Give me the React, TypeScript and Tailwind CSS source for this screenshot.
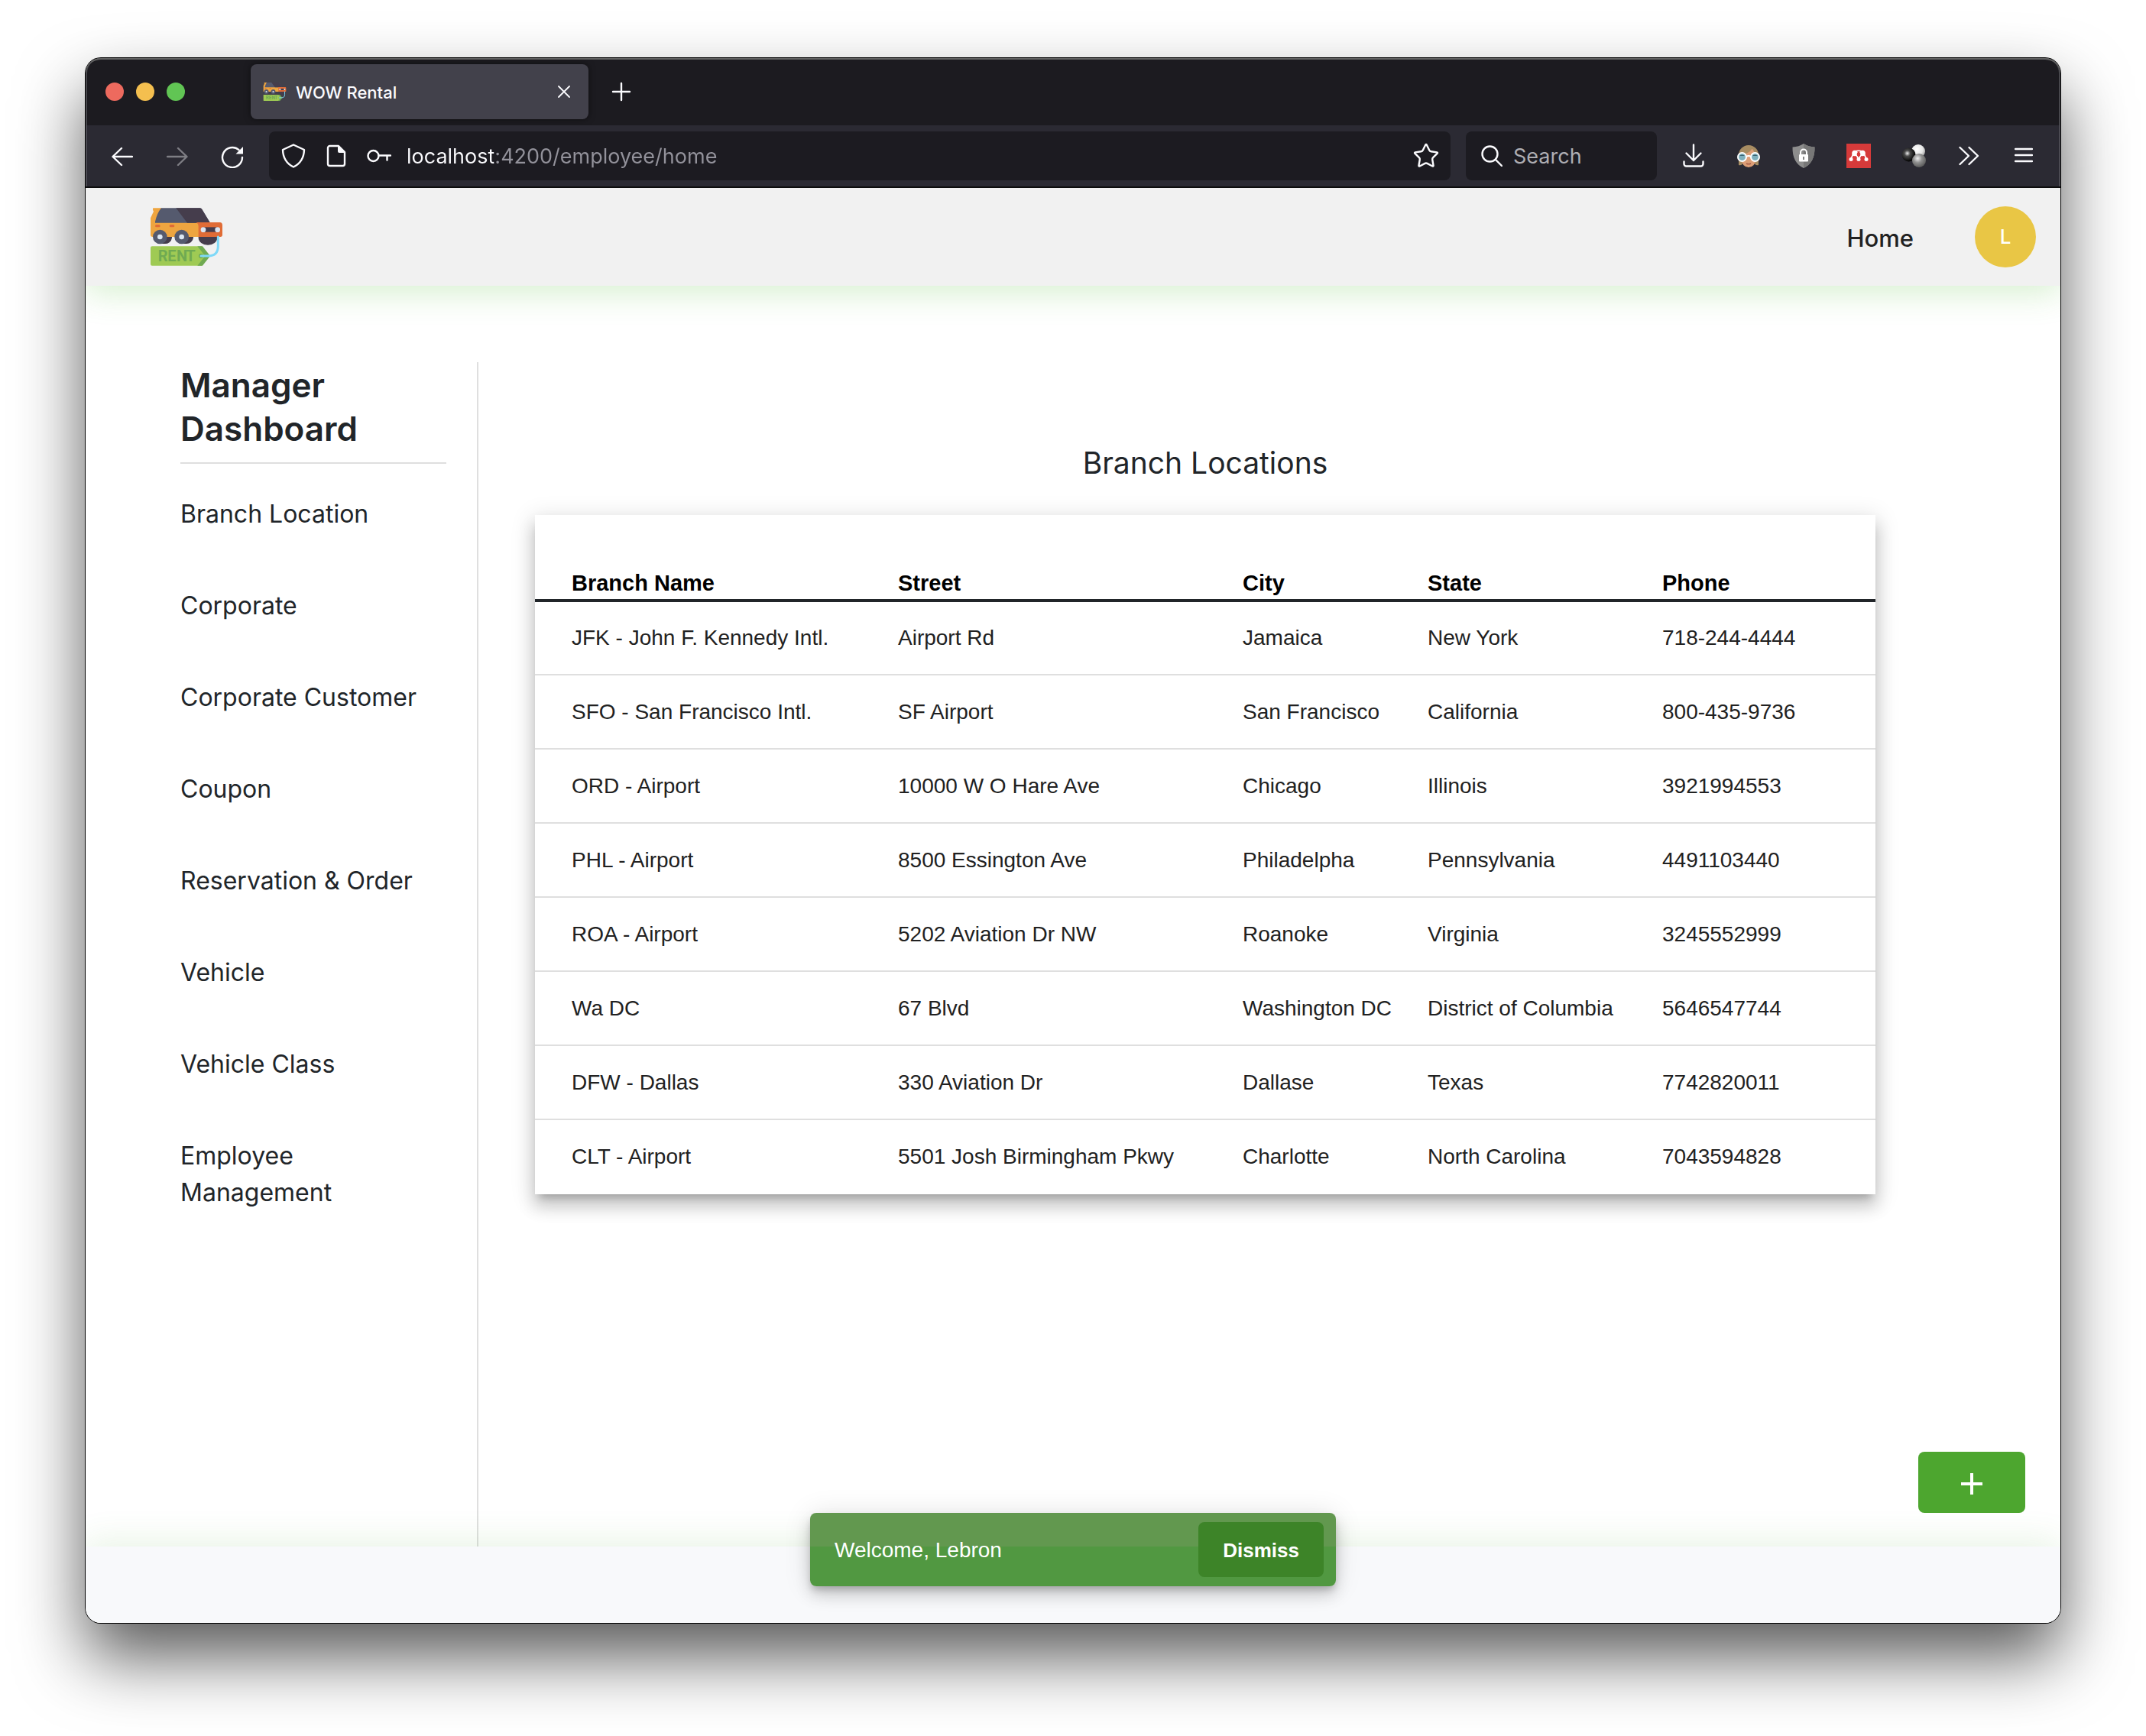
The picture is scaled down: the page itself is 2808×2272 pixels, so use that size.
import React from "react";
import { Star } from "lucide-react";

const navItems = [
  "Branch Location",
  "Corporate",
  "Corporate Customer",
  "Coupon",
  "Reservation & Order",
  "Vehicle",
  "Vehicle Class",
  "Employee Management",
];

const columns = ["Branch Name", "Street", "City", "State", "Phone"];

const branches = [
  ["JFK - John F. Kennedy Intl.", "Airport Rd", "Jamaica", "New York", "718-244-4444"],
  ["SFO - San Francisco Intl.", "SF Airport", "San Francisco", "California", "800-435-9736"],
  ["ORD - Airport", "10000 W O Hare Ave", "Chicago", "Illinois", "3921994553"],
  ["PHL - Airport", "8500 Essington Ave", "Philadelpha", "Pennsylvania", "4491103440"],
  ["ROA - Airport", "5202 Aviation Dr NW", "Roanoke", "Virginia", "3245552999"],
  ["Wa DC", "67 Blvd", "Washington DC", "District of Columbia", "5646547744"],
  ["DFW - Dallas", "330 Aviation Dr", "Dallase", "Texas", "7742820011"],
  ["CLT - Airport", "5501 Josh Birmingham Pkwy", "Charlotte", "North Carolina", "7043594828"],
];

function RentLogo({ className }: { className: string }) {
  return (
    <svg viewBox="0 0 282 228" className={className} aria-hidden="true">
      <path d="M188 114H262V118A34 26 0 0 1 188 118Z" fill="#453d4c" />
      <path d="M30 114H84V118A27 26 0 0 1 54 141H38Z" fill="#453d4c" />
      <path d="M116 114H168V118A27 26 0 0 1 140 141H122Z" fill="#453d4c" />
      <path d="M10 1H44L30 57 192 57V114H8Q0 114 0 106V40L12 14Q7 8 10 1Z" fill="#eea540" />
      <path d="M42 1H194Q199 1 202 6L234 59H18V54Q26 20 42 1Z" fill="#555a6e" />
      <path d="M100 1H194Q199 1 202 6L234 59H144Z" fill="#453d4c" />
      <path d="M178 57H272Q282 58 282 68V106Q282 114 274 114H188V74Q188 60 178 57Z" fill="#e06c36" />
      <rect x="18" y="66" width="20" height="10" rx="5" fill="#e06c36" />
      <rect x="74" y="66" width="20" height="10" rx="5" fill="#e06c36" />
      <rect x="206" y="76" width="58" height="19" fill="#453d4c" />
      <circle cx="207" cy="86" r="10" fill="#dce7f3" />
      <circle cx="263" cy="86" r="10" fill="#dce7f3" />
      <circle cx="37" cy="114" r="28" fill="#555a6e" />
      <circle cx="37" cy="114" r="10" fill="#dce7f3" />
      <circle cx="122" cy="114" r="28" fill="#555a6e" />
      <circle cx="122" cy="114" r="10" fill="#dce7f3" />
      <path d="M6 151H200L234 189 200 227H6Q0 227 0 221V157Q0 151 6 151Z" fill="#9fca54" />
      <path d="M184 151H204L234 189 204 227H184L214 189Z" fill="#70aa52" />
      <circle cx="198" cy="189" r="9" fill="#70aa52" />
      <path d="M198 189H226Q265 189 265 150V114" fill="none" stroke="#7fd9f8" strokeWidth="9" strokeLinecap="round" />
      <text x="29 67 102 139" y="210" fontFamily="Roboto, sans-serif" fontWeight="700" fontSize="60" fill="#70aa52">
        RENT
      </text>
    </svg>
  );
}

const line = {
  fill: "none",
  stroke: "#fbfbfe",
  strokeWidth: 2.4,
  strokeLinecap: "round" as const,
  strokeLinejoin: "round" as const,
};

function ToolButton({ label, children }: { label: string; children: React.ReactNode }) {
  return (
    <button type="button" aria-label={label} className="flex h-16 w-[72px] shrink-0 items-center justify-center">
      {children}
    </button>
  );
}

function FieldButton({ label, children }: { label: string; children: React.ReactNode }) {
  return (
    <button type="button" aria-label={label} className="flex h-16 w-14 shrink-0 items-center justify-center">
      {children}
    </button>
  );
}

function TabStrip() {
  return (
    <div className="flex h-[88px] shrink-0 items-center rounded-t-[20px] bg-[#1c1b20] pl-[26px] shadow-[inset_0_2px_0_#626262,inset_2px_0_0_#47474c,inset_-2px_0_0_#47474c]">
      <div className="flex gap-4">
        <button type="button" aria-label="Close window" className="size-6 rounded-full bg-[#ed6a5e]" />
        <button type="button" aria-label="Minimize window" className="size-6 rounded-full bg-[#f4bf4f]" />
        <button type="button" aria-label="Zoom window" className="size-6 rounded-full bg-[#61c554]" />
      </div>
      <div className="ml-[86px] flex h-[72px] w-[442px] items-center rounded-lg bg-[#42414b] pl-4 pr-5 shadow-[0_0_8px_rgba(0,0,0,0.5)]">
        <RentLogo className="h-6 w-[31px]" />
        <span className="ml-3 flex-1 pt-0.5 text-[22px] leading-8 font-medium text-[#fbfbfe]">WOW Rental</span>
        <button type="button" aria-label="Close tab" className="flex size-6 items-center justify-center">
          <svg viewBox="0 0 16 16" className="size-4">
            <path d="M1 1 15 15M15 1 1 15" {...line} strokeWidth={1.8} />
          </svg>
        </button>
      </div>
      <button type="button" aria-label="New tab" className="ml-[30px] flex size-[26px] items-center justify-center">
        <svg viewBox="0 0 26 26" className="size-[26px]">
          <path d="M13 2V24M2 13H24" {...line} />
        </svg>
      </button>
    </div>
  );
}

function Toolbar() {
  return (
    <div className="flex h-[82px] shrink-0 items-center border-b-2 border-[#0c0c0d] bg-[#2b2a33] px-3 shadow-[inset_2px_0_0_#4b4a52,inset_-2px_0_0_#4b4a52]">
      <ToolButton label="Back">
        <svg viewBox="0 0 28 28" className="size-7">
          <path d="M27 15H2M13 4 1.5 15 13 26" {...line} />
        </svg>
      </ToolButton>
      <ToolButton label="Forward">
        <svg viewBox="0 0 28 28" className="size-7 opacity-40">
          <path d="M1 15H26M15 4 26.5 15 15 26" {...line} />
        </svg>
      </ToolButton>
      <ToolButton label="Reload">
        <svg viewBox="0 0 32 32" className="size-8">
          <path d="M29 18A13 13 0 1 1 24.5 8.2" {...line} />
          <path d="M30 4V13.5H20.5Z" fill="#fbfbfe" />
        </svg>
      </ToolButton>

      <div className="ml-3 flex h-16 min-w-0 flex-1 items-center rounded-lg bg-[#1c1b21] px-1">
        <FieldButton label="Tracking protection">
          <svg viewBox="0 0 32 32" className="size-8">
            <path d="M16 1.5 30 8Q29.500 24 16 30.500 2.500 24 2 8Z" {...line} />
          </svg>
        </FieldButton>
        <FieldButton label="Site information">
          <svg viewBox="0 0 28 32" className="h-8 w-7">
            <path d="M5.500 3H17L25 11V26.500A2.500 2.500 0 0 1 22.500 29H5.500A2.500 2.500 0 0 1 3 26.500V5.500A2.500 2.500 0 0 1 5.500 3Z" {...line} />
            <path d="M16 2 26 12H18A2 2 0 0 1 16 10Z" fill="#fbfbfe" />
          </svg>
        </FieldButton>
        <FieldButton label="Saved password">
          <svg viewBox="0 0 32 20" className="h-5 w-8">
            <circle cx="8.500" cy="10" r="7" {...line} />
            <path d="M15.500 9.500H31M26.500 9.500V15.500" {...line} />
          </svg>
        </FieldButton>
        <input
          type="text"
          aria-label="Address"
          defaultValue="localhost:4200/employee/home"
          className="ml-2 h-10 min-w-0 flex-1 bg-[linear-gradient(90deg,#fbfbfe_114px,#93929b_114px)] bg-clip-text pt-0.5 text-[27px] text-transparent outline-none"
        />
        <FieldButton label="Bookmark this page">
          <Star className="size-9 text-[#fbfbfe]" strokeWidth={1.6} />
        </FieldButton>
      </div>

      <label className="ml-5 flex h-16 w-[250px] items-center rounded-lg bg-[#1c1b21] pl-5">
        <svg viewBox="0 0 28 28" className="size-7 shrink-0">
          <circle cx="11.500" cy="11.500" r="10" {...line} />
          <path d="M19 19 27 27" {...line} />
        </svg>
        <input
          type="text"
          aria-label="Search"
          placeholder="Search"
          className="ml-3.5 h-10 w-full min-w-0 bg-transparent pt-0.5 text-[27px] outline-none placeholder:text-[#aeaeb3]"
        />
      </label>

      <div className="ml-3 flex">
        <ToolButton label="Downloads">
          <svg viewBox="0 0 28 32" className="h-8 w-7">
            <path d="M14 1.500V22M4.500 12.500 14 22 23.500 12.500M1.500 23.500V26.500A3 3 0 0 0 4.500 29.500H23.500A3 3 0 0 0 26.500 26.500V23.500" {...line} />
          </svg>
        </ToolButton>
        <ToolButton label="Profile extension">
          <svg viewBox="0 0 32 32" className="size-8">
            <path d="M3 28V15A13 13 0 0 1 29 15V28Q25 29 24 26H8Q7 29 3 28Z" fill="#a78c62" />
            <path d="M6 17Q10 9 21 7L26 15V20Q24 31 16 31 8 31 6 20Z" fill="#dc9e77" />
            <path d="M5 16Q7 8 21 6 17 13 5 16Z" fill="#a78c62" />
            <circle cx="7.500" cy="17.500" r="5.500" fill="#7fb0bd" stroke="#fff" strokeWidth="2" />
            <circle cx="24.500" cy="17.500" r="5.500" fill="#7fb0bd" stroke="#fff" strokeWidth="2" />
            <path d="M4 16A4 3 0 0 1 11 16ZM21 16A4 3 0 0 1 28 16Z" fill="#3d6472" />
            <path d="M13 17Q16 15 19 17" fill="none" stroke="#fff" strokeWidth="2" />
            <path d="M13 26Q16 27.500 19 26" fill="none" stroke="#a85e48" strokeWidth="1.500" />
          </svg>
        </ToolButton>
        <ToolButton label="Privacy extension">
          <svg viewBox="0 0 32 32" className="size-8">
            <path d="M16 0Q22 4 30.500 4.500 31 25 16 32 1 25 1.500 4.500 10 4 16 0Z" fill="#8d8d8d" />
            <path d="M16 0Q22 4 30.500 4.500 31 25 16 32Z" fill="#777" />
            <rect x="10" y="14" width="12" height="9.500" rx="1" fill="#fff" />
            <path d="M12 14V11.500A4 4 0 0 1 20 11.500V14" fill="none" stroke="#fff" strokeWidth="2" />
            <path d="M16 17V21" stroke="#777" strokeWidth="1.800" />
          </svg>
        </ToolButton>
        <ToolButton label="Reference manager extension">
          <svg viewBox="0 0 32 32" className="size-8">
            <rect width="32" height="32" fill="#d63a3a" />
            <path d="M6 20 9 13M26 20 23 13M11 12 16 20 21 12" fill="none" stroke="#fff" strokeWidth="1.800" />
            <path d="M11 10.500Q16 8 21 10.500" fill="none" stroke="#fff" strokeWidth="1.500" />
            <circle cx="11" cy="12.500" r="3.800" fill="#fff" />
            <circle cx="21" cy="12.500" r="3.800" fill="#fff" />
            <circle cx="16" cy="14" r="2.400" fill="#d63a3a" />
            <circle cx="6" cy="20.500" r="2.500" fill="#fff" />
            <circle cx="16" cy="20.500" r="2.500" fill="#fff" />
            <circle cx="26" cy="20.500" r="2.500" fill="#fff" />
          </svg>
        </ToolButton>
        <ToolButton label="Spheres extension">
          <svg viewBox="0 0 32 32" className="size-8">
            <defs>
              <radialGradient id="ball-white" cx="0.4" cy="0.35" r="0.700">
                <stop offset="0" stopColor="#fff" />
                <stop offset="0.600" stopColor="#e6e6e6" />
                <stop offset="1" stopColor="#9a9a9a" />
              </radialGradient>
              <radialGradient id="ball-black" cx="0.4" cy="0.4" r="0.600">
                <stop offset="0" stopColor="#f0f0f0" />
                <stop offset="0.350" stopColor="#4a4a4a" />
                <stop offset="1" stopColor="#000" />
              </radialGradient>
              <radialGradient id="ball-gray" cx="0.4" cy="0.35" r="0.700">
                <stop offset="0" stopColor="#efefef" />
                <stop offset="0.450" stopColor="#8e8e8e" />
                <stop offset="1" stopColor="#555" />
              </radialGradient>
            </defs>
            <circle cx="22" cy="10" r="9" fill="url(#ball-white)" />
            <circle cx="9.500" cy="14.500" r="9" fill="url(#ball-black)" />
            <circle cx="23" cy="22" r="9" fill="url(#ball-gray)" />
          </svg>
        </ToolButton>
        <ToolButton label="More tools">
          <svg viewBox="0 0 28 28" className="size-7">
            <path d="M2.500 3 14 14 2.500 25M14.500 3 26 14 14.500 25" {...line} />
          </svg>
        </ToolButton>
        <ToolButton label="Menu">
          <svg viewBox="0 0 24 24" className="size-6">
            <path d="M1 3H23M1 11H23M1 19H23" {...line} />
          </svg>
        </ToolButton>
      </div>
    </div>
  );
}

function SiteHeader() {
  return (
    <header className="relative z-10 flex h-32 shrink-0 items-center bg-[#f1f1f1] pl-[85px] pr-8 shadow-[0_8px_44px_rgba(77,190,47,0.24)]">
      <a href="#home" aria-label="WOW Rental">
        <RentLogo className="h-[76px] w-[94px]" />
      </a>
      <a href="#home" className="ml-auto pt-1 text-[31px] leading-10 font-medium text-[#212121]">
        Home
      </a>
      <button
        type="button"
        className="ml-20 flex size-20 items-center justify-center rounded-full bg-[#e9c645] pb-0.5 text-[26px] font-medium text-white"
      >
        L
      </button>
    </header>
  );
}

function Sidebar() {
  return (
    <aside className="w-[514px] shrink-0 border-r-2 border-[#dfdfdf] pl-[124px] pr-10">
      <h2 className="border-b-2 border-[#dfdfdf] pt-0.5 pb-[15px] text-[44px] leading-[57px] font-semibold text-[#212529]">
        Manager Dashboard
      </h2>
      <nav className="mt-[42px] flex max-w-[320px] flex-col gap-[72px]">
        {navItems.map((item) => (
          <a key={item} href="#section" className="text-[32px] leading-[48px] text-[#212529]">
            {item}
          </a>
        ))}
      </nav>
    </aside>
  );
}

function BranchTable() {
  return (
    <table className="mt-11 w-full table-fixed border-separate border-spacing-0 bg-white text-left font-['Liberation_Sans',Arial,sans-serif] shadow-[0_10px_10px_-6px_rgba(0,0,0,0.2),0_16px_20px_2px_rgba(0,0,0,0.14),0_6px_28px_4px_rgba(0,0,0,0.12)]">
      <colgroup>
        <col className="w-[475px]" />
        <col className="w-[451px]" />
        <col className="w-[242px]" />
        <col className="w-[307px]" />
        <col />
      </colgroup>
      <thead>
        <tr>
          {columns.map((name) => (
            <th
              key={name}
              scope="col"
              className="h-[114px] border-b-4 border-[#212529] pb-[5px] align-bottom text-[29px] leading-8 font-bold text-black first:pl-12"
            >
              {name}
            </th>
          ))}
        </tr>
      </thead>
      <tbody>
        {branches.map((branch) => (
          <tr key={branch[0]} className="group">
            {branch.map((value) => (
              <td
                key={value}
                className="h-[97px] border-b-2 border-[#dfdfdf] text-[28px] leading-8 whitespace-nowrap text-[#212121] group-first:h-24 first:pl-12 group-last:border-transparent"
              >
                {value}
              </td>
            ))}
          </tr>
        ))}
      </tbody>
    </table>
  );
}

export default function App() {
  return (
    <div className="flex min-h-screen bg-white px-28 pt-[76px] pb-[148px] font-['Inter',sans-serif]">
      <div className="relative flex min-w-0 flex-1 flex-col rounded-[20px] bg-white shadow-[0_0_0_1px_#000,0_45px_88px_rgba(0,0,0,0.65)]">
        <TabStrip />
        <Toolbar />
        <div className="flex flex-1 flex-col overflow-hidden rounded-b-[20px]">
          <SiteHeader />
          <main className="flex flex-1 pt-[100px]">
            <Sidebar />
            <section className="min-w-0 flex-1 pt-[108px] pr-[242px] pl-[74px]">
              <h1 className="text-center text-[39px] leading-[48px] text-[#212529]">Branch Locations</h1>
              <BranchTable />
            </section>
          </main>
          <footer className="relative h-[100px] shrink-0 bg-[#f8f9fb] shadow-[0_-8px_44px_rgba(77,166,47,0.12)]" />
        </div>

        <button
          type="button"
          aria-label="Add branch"
          className="absolute right-[46px] bottom-36 flex h-20 w-[140px] items-center justify-center rounded-lg bg-[#4da62f]"
        >
          <svg viewBox="0 0 30 30" className="mt-1 size-[30px]">
            <path d="M15 1V29M1 15H29" stroke="#fff" strokeWidth="4" />
          </svg>
        </button>

        <div
          role="status"
          className="absolute bottom-12 left-1/2 z-20 flex h-24 w-[688px] -translate-x-1/2 items-center justify-between rounded-lg bg-[linear-gradient(#62984f_44px,#519841_44px)] pr-4 pl-8 font-['Liberation_Sans',Arial,sans-serif] text-[28px] text-white shadow-[0_6px_10px_-2px_rgba(0,0,0,0.2),0_12px_20px_0_rgba(0,0,0,0.14),0_2px_36px_0_rgba(0,0,0,0.12)]"
        >
          <span className="pt-0.5">Welcome, Lebron</span>
          <button type="button" className="h-[72px] rounded-lg bg-[#3d8428] px-8 pt-0.5 text-[26px] font-bold">
            Dismiss
          </button>
        </div>
      </div>
    </div>
  );
}
